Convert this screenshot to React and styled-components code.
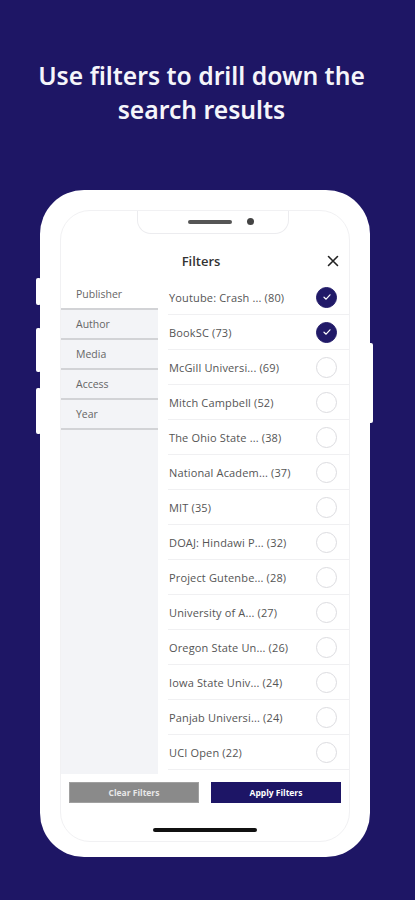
import styled, { createGlobalStyle } from 'styled-components'

const filters = ['Publisher', 'Author', 'Media', 'Access', 'Year']

const publishers = [
  { name: 'Youtube: Crash ... (80)', checked: true },
  { name: 'BookSC (73)', checked: true },
  { name: 'McGill Universi... (69)' },
  { name: 'Mitch Campbell (52)' },
  { name: 'The Ohio State ... (38)' },
  { name: 'National Academ... (37)' },
  { name: 'MIT (35)' },
  { name: 'DOAJ: Hindawi P... (32)' },
  { name: 'Project Gutenbe... (28)' },
  { name: 'University of A... (27)' },
  { name: 'Oregon State Un... (26)' },
  { name: 'Iowa State Univ... (24)' },
  { name: 'Panjab Universi... (24)' },
  { name: 'UCI Open (22)' },
]

const CheckIcon = () => (
  <svg width="10" height="10" viewBox="0 0 10 10">
    <path d="M2 5.2 L4.1 7.2 L8 2.8" fill="none" stroke="#fff" strokeWidth="1.2" strokeLinecap="round" strokeLinejoin="round" />
  </svg>
)

const CloseIcon = () => (
  <svg width="12" height="12" viewBox="0 0 12 12">
    <path d="M1.5 1.5 L10.5 10.5 M10.5 1.5 L1.5 10.5" stroke="#222" strokeWidth="1.6" strokeLinecap="round" />
  </svg>
)

export default function App() {
  return (
    <Page>
      <GlobalStyle />
      <Title>
        Use filters to drill down the
        <br />
        search results
      </Title>
      <Phone>
        <SideButton $side="left" $top={88} $height={27} />
        <SideButton $side="left" $top={138} $height={44} />
        <SideButton $side="left" $top={198} $height={46} />
        <SideButton $side="right" $top={153} $height={80} />
        <Screen>
          <Notch>
            <Speaker />
            <Camera />
          </Notch>
          <Header>
            Filters
            <CloseButton>
              <CloseIcon />
            </CloseButton>
          </Header>
          <Body>
            <Sidebar>
              {filters.map((f, i) => (
                <SideItem key={f} $active={i === 0}>{f}</SideItem>
              ))}
            </Sidebar>
            <List>
              {publishers.map((p) => (
                <Row key={p.name}>
                  <RowLabel>{p.name}</RowLabel>
                  <Radio $checked={p.checked}>{p.checked && <CheckIcon />}</Radio>
                </Row>
              ))}
            </List>
          </Body>
          <Footer>
            <Buttons>
              <Button $variant="clear">Clear Filters</Button>
              <Button $variant="apply">Apply Filters</Button>
            </Buttons>
            <HomeIndicator />
          </Footer>
        </Screen>
      </Phone>
    </Page>
  )
}

const GlobalStyle = createGlobalStyle`
  html, body {
    margin: 0;
    padding: 0;
    background: #1e1665;
  }
  * {
    box-sizing: border-box;
  }
`

const Page = styled.div`
  width: 415px;
  height: 900px;
  overflow: hidden;
  display: flex;
  flex-direction: column;
  padding-top: 59px;
  font-family: "Open Sans", "Liberation Sans", sans-serif;
`

const Title = styled.h1`
  margin: 0;
  padding-right: 12px;
  text-align: center;
  color: #f5f5fa;
  font-family: "Noto Sans", sans-serif;
  font-weight: 600;
  font-size: 24.7px;
  line-height: 34px;
`

const Phone = styled.div`
  position: relative;
  margin: 63px 0 0 40px;
  width: 330px;
  height: 667px;
  background: #fff;
  border-radius: 44px;
  padding: 20px 20px 15px 20px;
`

const SideButton = styled.div`
  position: absolute;
  top: ${(p) => p.$top}px;
  height: ${(p) => p.$height}px;
  width: 5px;
  background: #fff;
  border-radius: 2px;
  ${(p) => (p.$side === 'left' ? 'left: -4px;' : 'right: -3px;')}
`

const Screen = styled.div`
  position: relative;
  height: 100%;
  border: 1px solid #f1f1f3;
  border-radius: 30px;
  padding-top: 31px;
  display: flex;
  flex-direction: column;
  overflow: hidden;
`

const Notch = styled.div`
  position: absolute;
  top: -1px;
  left: 76px;
  width: 152px;
  height: 24px;
  background: #fff;
  border: 1px solid #ececef;
  border-top: none;
  border-radius: 0 0 14px 14px;
  display: flex;
  align-items: center;
  justify-content: center;
  gap: 15px;
  padding-left: 16px;
`

const Speaker = styled.div`
  width: 44px;
  height: 4px;
  border-radius: 2px;
  background: #555;
`

const Camera = styled.div`
  width: 7px;
  height: 7px;
  border-radius: 50%;
  background: #444;
`

const Header = styled.div`
  position: relative;
  height: 38px;
  display: flex;
  align-items: center;
  justify-content: center;
  padding-right: 8px;
  font-size: 13px;
  font-weight: 600;
  color: #333;
`

const CloseButton = styled.div`
  position: absolute;
  right: 10px;
  top: 13px;
  display: flex;
`

const Body = styled.div`
  display: flex;
  height: 494px;
`

const Sidebar = styled.div`
  width: 97px;
  background: #f3f4f7;
  display: flex;
  flex-direction: column;
`

const SideItem = styled.div`
  height: 30px;
  display: flex;
  align-items: center;
  padding-left: 15px;
  font-size: 10.5px;
  color: #666;
  background: ${(p) => (p.$active ? '#fff' : '#f3f4f7')};
  border-bottom: 2px solid #d2d3d6;
`

const List = styled.div`
  flex: 1;
  padding-left: 10px;
  display: flex;
  flex-direction: column;
`

const Row = styled.div`
  height: 35px;
  flex-shrink: 0;
  display: flex;
  align-items: center;
  justify-content: space-between;
  padding: 0 12px 0 1px;
  border-bottom: 1px solid #f0f0f2;
`

const RowLabel = styled.span`
  font-size: 11px;
  color: #555;
  letter-spacing: 0.15px;
`

const Radio = styled.div`
  width: 21px;
  height: 21px;
  border-radius: 50%;
  display: flex;
  align-items: center;
  justify-content: center;
  background: ${(p) => (p.$checked ? '#211a68' : '#fff')};
  border: 1px solid ${(p) => (p.$checked ? '#211a68' : '#dcdce0')};
`

const Footer = styled.div`
  flex: 1;
  display: flex;
  flex-direction: column;
  align-items: center;
  padding-top: 8px;
`

const Buttons = styled.div`
  display: flex;
  gap: 12px;
  width: 100%;
  padding: 0 8px;
`

const Button = styled.div`
  flex: 1;
  height: 21px;
  display: flex;
  align-items: center;
  justify-content: center;
  font-size: 8.5px;
  font-weight: 700;
  color: ${(p) => (p.$variant === 'clear' ? '#e8e8e8' : '#fff')};
  background: ${(p) => (p.$variant === 'clear' ? '#8a8a8a' : '#1d1566')};
  border: 1px solid ${(p) => (p.$variant === 'clear' ? '#a0a0a0' : '#1d1566')};
`

const HomeIndicator = styled.div`
  margin-top: 25px;
  width: 104px;
  height: 4px;
  border-radius: 2px;
  background: #111;
`
